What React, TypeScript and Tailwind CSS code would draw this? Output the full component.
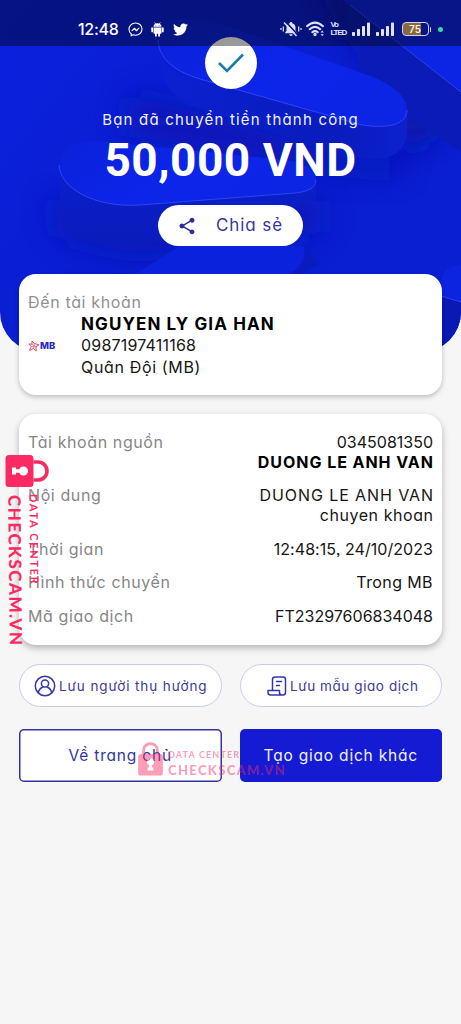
import type { ReactNode } from "react";
import { FaTwitter } from "react-icons/fa";
import { MdShare } from "react-icons/md";

function Backdrop() {
  return (
    <svg
      className="absolute inset-x-0 top-0 h-[352px] w-full rounded-b-[40px]"
      viewBox="0 0 461 352"
      preserveAspectRatio="none"
    >
      <defs>
        <linearGradient id="base" x1="0" y1="0" x2="1" y2="0.6">
          <stop offset="0" stopColor="#0a20de" />
          <stop offset="0.55" stopColor="#0a1ecf" />
          <stop offset="1" stopColor="#0a1fd2" />
        </linearGradient>
        <linearGradient id="side" gradientUnits="userSpaceOnUse" x1="0" y1="180" x2="0" y2="250">
          <stop offset="0" stopColor="#0b1fca" />
          <stop offset="1" stopColor="#0a1cba" />
        </linearGradient>
        <linearGradient id="sideUpper" gradientUnits="userSpaceOnUse" x1="160" y1="0" x2="407" y2="0">
          <stop offset="0" stopColor="#0b20d2" />
          <stop offset="0.7" stopColor="#0a1cbc" />
          <stop offset="1" stopColor="#0c20cf" />
        </linearGradient>
        <linearGradient id="top" x1="0" y1="0" x2="1" y2="0.4">
          <stop offset="0" stopColor="#0b21da" />
          <stop offset="0.6" stopColor="#0c25ea" />
          <stop offset="1" stopColor="#0c24e4" />
        </linearGradient>
        <filter id="soft" x="-50%" y="-50%" width="200%" height="200%">
          <feGaussianBlur stdDeviation="16" />
        </filter>
      </defs>
      <rect width="461" height="352" fill="url(#base)" />
      <path d="M320 -20H440V130L400 155L390 90Z" fill="#0817a0" filter="url(#soft)" />
      <path d="M130 95L340 150L400 150V172L300 165L130 135Z" fill="#0818aa" filter="url(#soft)" opacity="0.8" />
      <path d="M50 200L320 200V232L130 252L60 235Z" fill="#0919b0" filter="url(#soft)" opacity="0.8" />
      <path d="M343 0H461V92Z" fill="#0c24e4" />
      <path d="M343 0L461 92V152L408 118L360 70Z" fill="#0a1bb8" />
      <path d="M350 5L461 92" stroke="#2c42e6" fill="none" />
      <path
        d="M158 45Q160 76 205 82L358 126Q398 132 407 108V135Q404 158 374 159L340 155L190 105Q158 92 158 45Z"
        fill="url(#sideUpper)"
      />
      <path
        d="M158 40C156 14 190 14 215 22L362 73C392 83 407 96 407 110C407 124 390 129 362 125L200 79C170 70 159 56 158 40Z"
        fill="url(#top)"
      />
      <path
        d="M158 40C159 56 170 70 200 79L362 125C390 129 407 124 407 110"
        stroke="#3045ee"
        fill="none"
      />
      <path
        d="M59 165C62 190 100 208 140 205L295 193Q317 190 316 180V200L150 245C100 248 62 240 60 220Z"
        fill="url(#side)"
      />
      <path
        d="M59 165C60 148 76 140 98 141L285 160C306 163 316 171 316 180C316 188 307 192 295 193L140 205C94 208 60 188 59 165Z"
        fill="url(#top)"
      />
      <path
        d="M59 165C60 188 94 208 140 205L295 193C307 192 316 188 316 180"
        stroke="#3045ee"
        fill="none"
      />
      <path d="M135 274L180 246H304Q308 262 290 274Z" fill="#0b22dc" />
      <path d="M304 246Q308 262 290 274H300L320 264Z" fill="#0a1cc0" />
      <path d="M461 264Q441 268 441 282V296L461 302Z" fill="#0c24e0" />
      <path d="M441 296L461 302V352H425Z" fill="#0919b4" />
      <path d="M441 296L461 302" stroke="#3045ee" />
    </svg>
  );
}

function Signal() {
  return (
    <svg width="19" height="15" viewBox="0 0 19 15" fill="#dfe3fb">
      <rect x="0" y="10" width="3" height="4" rx="0.8" />
      <rect x="5" y="7" width="3" height="7" rx="0.8" />
      <rect x="10" y="4" width="3" height="10" rx="0.8" />
      <rect x="15" y="0.5" width="3" height="13.5" rx="0.8" />
    </svg>
  );
}

function StatusBar() {
  return (
    <div className="absolute inset-x-0 top-0 z-10 flex h-[46px] items-center bg-black/40 pt-3 pl-[78px] text-white">
      <span className="w-[50px] font-[Inter] text-[16px] font-medium tracking-[-0.3px]">
        12:48
      </span>
      <svg width="15" height="15" viewBox="0 0 15 15" fill="none" stroke="white">
        <path
          d="M7.5 1C3.8 1 1 3.7 1 7.2c0 1.900.8 3.500 2.200 4.600v1.800l1.800-.8c.8.2 1.600.4 2.500.4 3.700 0 6.500-2.600 6.500-6.100S11.200 1 7.500 1Z"
          strokeWidth="1.1"
        />
        <path d="M3.800 8.800l2.600-2.800 2.200 1.900 2.600-2-2.600 3.100-2.200-1.800z" fill="white" strokeWidth="0.900" />
      </svg>
      <svg className="ml-[8px]" width="13" height="15" viewBox="0 0 13 15" fill="white">
        <path d="M2.500 4.800C2.500 2.600 4.200 1.200 6.500 1.200S10.500 2.600 10.500 4.800Z" />
        <path d="M3.600 0.400L4.700 2M9.400 0.400L8.300 2" stroke="white" strokeWidth="0.700" />
        <path d="M2.500 5.400H10.500V11Q10.500 11.800 9.700 11.800H3.300Q2.500 11.800 2.500 11Z" />
        <rect x="0.300" y="5.300" width="1.700" height="5" rx="0.850" />
        <rect x="11" y="5.300" width="1.700" height="5" rx="0.850" />
        <rect x="4" y="10" width="1.800" height="4.700" rx="0.900" />
        <rect x="7.200" y="10" width="1.800" height="4.700" rx="0.900" />
        <circle cx="4.900" cy="3.400" r="0.450" fill="#0c1585" />
        <circle cx="8.100" cy="3.400" r="0.450" fill="#0c1585" />
      </svg>
      <FaTwitter className="ml-[9px]" size={15} />
      <div className="ml-auto flex items-center pr-[18px]">
        <svg width="22" height="18" viewBox="0 0 22 18" fill="#dfe3fb">
          <path d="M11 2c.8 0 1.300.5 1.300 1.200C14.500 3.800 15.500 5.500 15.500 7.500v3.300l1.300 1.700v.8H5.200v-.8l1.300-1.700V7.500c0-2 1-3.700 3.200-4.300C9.700 2.500 10.200 2 11 2Z" />
          <path d="M9.300 14.300h3.400a1.700 1.700 0 0 1-3.400 0Z" />
          <path d="M5.500 1.500L18 15" stroke="#0c1585" strokeWidth="1.600" />
          <path d="M4 2.500L16.500 16" stroke="#dfe3fb" strokeWidth="1.400" />
          <path d="M3.300 6.500v5M1 8v2M18.700 6.500v5M21 8v2" stroke="#dfe3fb" strokeWidth="1.200" />
        </svg>
        <svg className="ml-[4px]" width="20" height="16" viewBox="0 0 20 16" fill="none" stroke="#dfe3fb" strokeWidth="2" strokeLinecap="round">
          <path d="M1 5.200Q9 -2 17 5.200M3.700 8.200Q9 3.500 14.300 8.200M6.300 11.200Q9 9 11.700 11.200" />
          <circle cx="9" cy="13.500" r="0.700" />
          <path d="M14.500 11.500l1.700-1.900L17.900 11.500zM14.500 13.200l1.700 1.900 1.700-1.900z" fill="#dfe3fb" stroke="none" />
        </svg>
        <span className="ml-[5px] flex w-[15px] flex-col font-['Liberation_Sans'] text-[8px] leading-[8px] font-bold tracking-[-1.2px] text-[#dfe3fb]">
          <span>Vo</span>
          <span>LTED</span>
        </span>
        <span className="ml-[6px] flex gap-[5px]">
          <Signal />
          <Signal />
        </span>
        <span className="ml-[7px] flex h-[14px] w-[27px] items-center justify-center rounded-[4px] border-[1.5px] border-[#cfd3f2] bg-linear-to-r from-[#8a6743] from-70% to-transparent to-72% font-[Inter] text-[10px] leading-none font-semibold text-[#fff3d8]">
          75
        </span>
        <span className="ml-px h-[5px] w-[1.5px] rounded-full bg-[#cfd3f2]" />
        <span className="ml-[7px] size-[5px] rounded-full bg-[#35dba0]" />
      </div>
    </div>
  );
}

interface RowProps {
  label: string;
  children: ReactNode;
}

function Row({ label, children }: RowProps) {
  return (
    <div className="flex items-start justify-between">
      <span className="tracking-[0.6px] text-[#868686]">{label}</span>
      <div className="flex flex-col items-end">{children}</div>
    </div>
  );
}

function Lock({ className }: { className: string }) {
  return (
    <svg className={className} viewBox="0 0 32 44">
      <path d="M7 15.500V11a9 9 0 0 1 18 0v4.500" fill="none" stroke="#fc2a63" strokeWidth="3.600" />
      <path
        d="M3.500 15.500h25a3.500 3.500 0 0 1 3.500 3.500v21a3.500 3.500 0 0 1-3.500 3.500h-25A3.500 3.500 0 0 1 0 40V19a3.500 3.500 0 0 1 3.500-3.500Z"
        fill="#fc2a63"
      />
      <circle cx="16" cy="25.500" r="4.500" fill="white" />
      <path d="M14.200 28h3.600v5h1.800v4h-7.200v-4h1.800z" fill="white" />
    </svg>
  );
}

export default function App() {
  return (
    <div className="relative h-[1024px] w-full overflow-hidden bg-[#f6f6f7] font-[Inter,'Noto_Sans',sans-serif] text-[16px] text-[#161616] [font-feature-settings:'cv11','ss03']">
      <Backdrop />
      <StatusBar />

      <main className="relative flex flex-col px-[19px] pt-[37px]">
        <header className="flex flex-col items-center">
          <div className="flex size-[52px] items-center justify-center rounded-full bg-white">
            <svg width="28" height="22" viewBox="0 0 28 22" fill="none" stroke="#1f7aa8" strokeWidth="2.600">
              <path d="M2 11L10 19L26 2.500" />
            </svg>
          </div>
          <p className="mt-[21px] text-[15px] leading-5 tracking-[1.2px] whitespace-nowrap text-[#edf0ff]">
            Bạn đã chuyển tiền thành công
          </p>
          <p className="mt-[3px] font-[Roboto] text-[46px] leading-[54px] font-bold tracking-[0.5px] text-white">
            50,000 VND
          </p>
          <button className="mt-[18px] flex h-[41px] w-[145px] items-center rounded-full bg-white pl-[19px] text-[17px] text-[#3436a0]">
            <MdShare size={20} color="#2c2b9c" />
            <span className="mt-px ml-[19px] tracking-[0.9px]">Chia sẻ</span>
          </button>
        </header>

        <section className="mt-[28px] h-[121px] rounded-[17px] bg-white px-[9px] pt-[18px] leading-[21.5px] shadow-[0_2px_5px_rgba(0,0,0,0.24)]">
          <p className="tracking-[0.65px] text-[#909090]">Đến tài khoản</p>
          <div className="flex">
            <div className="flex w-[53px] items-center">
              <svg width="12" height="12" viewBox="0 0 12 12" fill="none" stroke="#e8476a" strokeWidth="1">
                <path d="M4 1L6.300 3.500L11 4.800L8 6.700L8.200 11L5.500 8.500L1.500 10.500L3.200 6.500L0.800 4L4 4.200Z" />
                <path d="M4 4.200L8 6.700M6.300 3.500L5.500 8.500M3.200 6.500L8 6.700" strokeWidth="0.600" />
              </svg>
              <span className="font-[Inter] text-[9.5px] leading-none font-extrabold text-[#2a2bbd]">
                MB
              </span>
            </div>
            <div className="flex flex-col whitespace-nowrap">
              <span className="text-[17px] font-bold tracking-[1.1px] text-black">
                NGUYEN LY GIA HAN
              </span>
              <span className="tracking-[0.2px]">0987197411168</span>
              <span className="tracking-[0.65px]">Quân Đội (MB)</span>
            </div>
          </div>
        </section>

        <section className="mt-[19px] flex h-[231px] flex-col gap-[13.5px] rounded-[17px] bg-white px-[9px] pt-[17.5px] leading-5 whitespace-nowrap shadow-[0_3px_7px_rgba(0,0,0,0.28)]">
          <Row label="Tài khoản nguồn">
            <span>0345081350</span>
            <span className="-mr-[0.9px] font-bold tracking-[0.95px] text-black">
              DUONG LE ANH VAN
            </span>
          </Row>
          <Row label="Nội dung">
            <span className="-mr-[0.9px] tracking-[0.9px]">DUONG LE ANH VAN</span>
            <span className="-mr-[0.5px] tracking-[0.55px]">chuyen khoan</span>
          </Row>
          <Row label="Thời gian">
            <span className="tracking-[0.06px]">12:48:15, 24/10/2023</span>
          </Row>
          <Row label="Hình thức chuyển">
            <span className="tracking-[0.4px]">Trong MB</span>
          </Row>
          <Row label="Mã giao dịch">
            <span>FT23297606834048</span>
          </Row>
        </section>

        <div className="mt-[19px] grid grid-cols-2 gap-x-[18px] text-[13.5px] whitespace-nowrap text-[#3a3c99]">
          <button className="flex h-[43px] items-center rounded-full border border-[#c8cde6] bg-white pl-[14px]">
            <svg width="22" height="22" viewBox="0 0 22 22" fill="none" stroke="#3436a8" strokeWidth="1.500">
              <circle cx="11" cy="11" r="9.700" />
              <circle cx="11" cy="8.500" r="3.600" />
              <path d="M4.300 17.800C5 14.500 7.500 12.500 9.300 11.800M17.700 17.800C17 14.500 14.500 12.500 12.700 11.800" />
            </svg>
            <span className="mt-px ml-[3px] tracking-[0.9px]">Lưu người thụ hưởng</span>
          </button>
          <button className="flex h-[43px] items-center rounded-full border border-[#c8cde6] bg-white pl-[26px]">
            <svg width="20" height="20" viewBox="0 0 20 20" fill="none" stroke="#3436a8" strokeWidth="1.500" strokeLinejoin="round">
              <path d="M5.500 14V3.500Q5.500 1 8 1H16Q18.500 1 18.500 3.500V16.500Q18.500 19 16 19H3.500Q1 19 1 16.500V14.500H12.500V16.500Q12.500 19 15 19" />
              <path d="M9.500 5.500H14.500M9.500 9.500H12.500" strokeLinecap="round" />
            </svg>
            <span className="mt-px ml-[3.5px] tracking-[0.58px]">Lưu mẫu giao dịch</span>
          </button>
        </div>

        <div className="mt-[22px] grid grid-cols-2 gap-x-[18px] text-[15.5px] tracking-[0.8px] whitespace-nowrap">
          <button className="h-[53px] rounded-[5px] bg-white text-[#3436a0] shadow-[inset_0_0_0_1.5px_#3133a6]">
            Về trang chủ
          </button>
          <button className="h-[53px] rounded-[5px] bg-[#141bd2] text-[#f0f2ff]">
            Tạo giao dịch khác
          </button>
        </div>
      </main>

      {/* vertical stamp */}
      <div className="absolute top-[455px] left-[5px] z-20 font-[Lato] text-[#fc2a63]">
        <Lock className="absolute top-[-6px] left-[6px] h-[44px] w-[32px] rotate-90" />
        <span className="absolute top-[40px] left-0 rotate-[-0.6deg] text-[17px] leading-[20px] font-black tracking-[1.5px] whitespace-nowrap [writing-mode:vertical-rl]">
          CHECKSCAM.VN
        </span>
        <span className="absolute top-[39px] left-[21px] rotate-[-0.6deg] text-[11px] leading-[16px] font-bold tracking-[1.7px] whitespace-nowrap [writing-mode:vertical-rl]">
          DATA CENTER
        </span>
      </div>

      {/* horizontal stamp */}
      <div className="absolute top-[742px] left-[138px] z-20 flex gap-[5px] font-[Lato] text-[#fc2a63] opacity-45">
        <Lock className="h-[34px] w-[25px]" />
        <div className="flex flex-col pt-[7px] whitespace-nowrap">
          <span className="text-[9px] leading-[12px] font-bold tracking-[1.15px]">
            DATA CENTER
          </span>
          <span className="mt-px text-[13px] leading-[16px] font-black tracking-[1.35px]">
            CHECKSCAM.VN
          </span>
        </div>
      </div>
    </div>
  );
}
